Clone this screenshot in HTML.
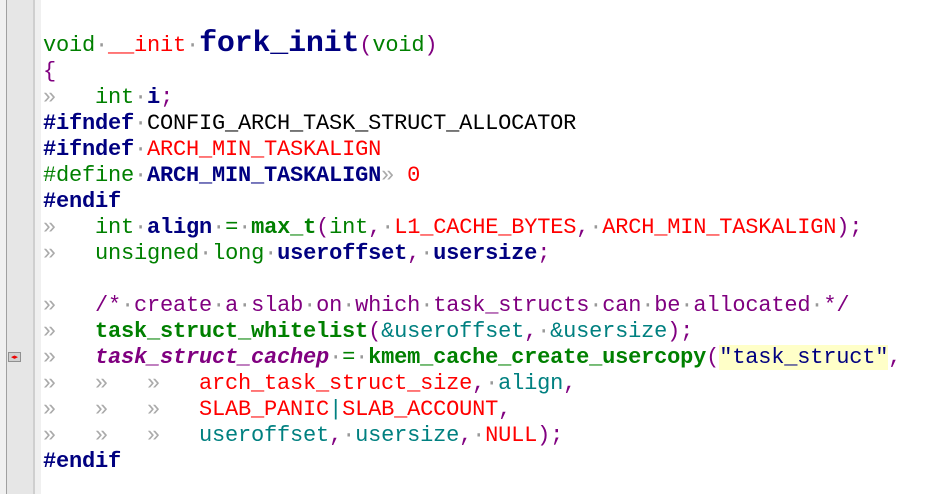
<!DOCTYPE html>
<html><head><meta charset="utf-8"><style>
html,body{margin:0;padding:0;background:#fff;width:933px;height:494px;overflow:hidden}
.g1{position:absolute;left:0;top:0;width:6px;height:494px;background:#f0f0f0}
.g2{position:absolute;left:6px;top:0;width:1px;height:494px;background:#a0a0a0}
.g3{position:absolute;left:7px;top:0;width:26px;height:494px;background:#e6e6e6}
.g4{position:absolute;left:33px;top:0;width:2px;height:494px;background:#cfcfcf}
.g5{position:absolute;left:35px;top:0;width:6px;height:494px;background:#f0f0f0}
.mk{position:absolute;left:8px;top:352px;width:13px;height:10px;background:#d0d0d0;border:1px solid #909090;box-sizing:border-box;color:#e00;font:7px "DejaVu Sans",sans-serif;line-height:8px;text-align:center}
.l{position:absolute;left:43px;white-space:pre;font-family:"Liberation Mono",monospace;font-size:22px;letter-spacing:-0.2px;line-height:26px;color:#000}
.d{color:#999}
.t{color:#aaa}
.gr{color:#008000}.r{color:#f00}.n{color:#000080}.b{font-weight:bold}.p{color:#800080}.tl{color:#008080}
.s{background:#ffffc8;color:#000080}
</style></head><body>
<div class="g1"></div><div class="g2"></div><div class="g3"></div><div class="g4"></div><div class="g5"></div>
<div class="mk">◂▸</div>
<div class="l" style="top:27px;line-height:34px"><span class="gr">void</span><span class="d">·</span><span class="r">__init</span><span class="d">·</span><span class="n b" style="font-size:30px">fork_init</span><span class="p">(</span><span class="gr">void</span><span class="p">)</span></div>
<div class="l p" style="top:59px">{</div>
<div class="l" style="top:85px"><span class="t">»   </span><span class="gr">int</span><span class="d">·</span><span class="n b">i</span><span class="p">;</span></div>
<div class="l" style="top:111px"><span class="n b">#ifndef</span><span class="d">·</span>CONFIG_ARCH_TASK_STRUCT_ALLOCATOR</div>
<div class="l" style="top:137px"><span class="n b">#ifndef</span><span class="d">·</span><span class="r">ARCH_MIN_TASKALIGN</span></div>
<div class="l" style="top:163px"><span class="gr">#define</span><span class="d">·</span><span class="n b">ARCH_MIN_TASKALIGN</span><span class="t">» </span><span class="r">0</span></div>
<div class="l" style="top:189px"><span class="n b">#endif</span></div>
<div class="l" style="top:215px"><span class="t">»   </span><span class="gr">int</span><span class="d">·</span><span class="n b">align</span><span class="d">·</span><span class="gr">=</span><span class="d">·</span><span class="gr b">max_t</span><span class="p">(</span><span class="gr">int</span><span class="p">,</span><span class="d">·</span><span class="r">L1_CACHE_BYTES</span><span class="p">,</span><span class="d">·</span><span class="r">ARCH_MIN_TASKALIGN</span><span class="p">);</span></div>
<div class="l" style="top:241px"><span class="t">»   </span><span class="gr">unsigned</span><span class="d">·</span><span class="gr">long</span><span class="d">·</span><span class="n b">useroffset</span><span class="p">,</span><span class="d">·</span><span class="n b">usersize</span><span class="p">;</span></div>
<div class="l p" style="top:293px"><span class="t">»   </span>/*<span class="d">·</span>create<span class="d">·</span>a<span class="d">·</span>slab<span class="d">·</span>on<span class="d">·</span>which<span class="d">·</span>task_structs<span class="d">·</span>can<span class="d">·</span>be<span class="d">·</span>allocated<span class="d">·</span>*/</div>
<div class="l" style="top:319px"><span class="t">»   </span><span class="gr b">task_struct_whitelist</span><span class="p">(</span><span class="tl">&amp;useroffset</span><span class="p">,</span><span class="d">·</span><span class="tl">&amp;usersize</span><span class="p">);</span></div>
<div class="l" style="top:345px"><span class="t">»   </span><span class="p b" style="font-style:italic">task_struct_cachep</span><span class="d">·</span><span class="gr">=</span><span class="d">·</span><span class="gr b">kmem_cache_create_usercopy</span><span class="p">(</span><span class="s">"task_struct"</span><span class="p">,</span></div>
<div class="l" style="top:371px"><span class="t">»   »   »   </span><span class="r">arch_task_struct_size</span><span class="p">,</span><span class="d">·</span><span class="tl">align</span><span class="p">,</span></div>
<div class="l" style="top:397px"><span class="t">»   »   »   </span><span class="r">SLAB_PANIC</span><span class="tl">|</span><span class="r">SLAB_ACCOUNT</span><span class="p">,</span></div>
<div class="l" style="top:423px"><span class="t">»   »   »   </span><span class="tl">useroffset</span><span class="p">,</span><span class="d">·</span><span class="tl">usersize</span><span class="p">,</span><span class="d">·</span><span class="r">NULL</span><span class="p">);</span></div>
<div class="l" style="top:449px"><span class="n b">#endif</span></div>
</body></html>
